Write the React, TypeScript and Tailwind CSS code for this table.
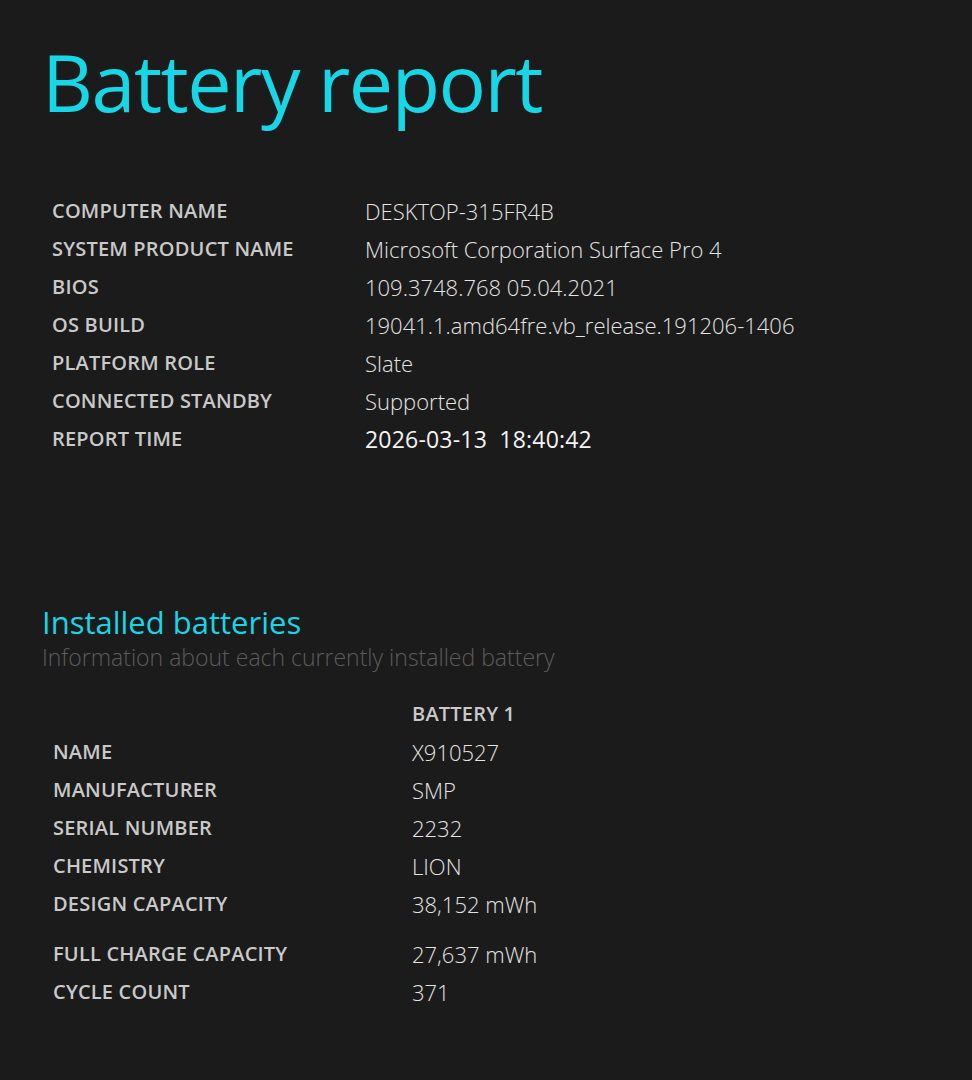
const systemRows: [string, string][] = [
  ["Computer name", "DESKTOP-315FR4B"],
  ["System product name", "Microsoft Corporation Surface Pro 4"],
  ["BIOS", "109.3748.768 05.04.2021"],
  ["OS build", "19041.1.amd64fre.vb_release.191206-1406"],
  ["Platform role", "Slate"],
  ["Connected standby", "Supported"],
];

const batteryRows: [string, string][] = [
  ["Name", "X910527"],
  ["Manufacturer", "SMP"],
  ["Serial number", "2232"],
  ["Chemistry", "LION"],
  ["Design capacity", "38,152 mWh"],
];

const font = { fontFamily: '"Open Sans", "Noto Sans", sans-serif' };

function Label({ children }: { children: React.ReactNode }) {
  return (
    <div className="text-[20px] font-semibold uppercase tracking-[0.2px] text-[#c9c9c9]">
      {children}
    </div>
  );
}

function Value({ children, strong }: { children: React.ReactNode; strong?: boolean }) {
  return (
    <div
      className={
        strong
          ? "text-[23px] font-normal tracking-[0.2px] text-[#f4f4f4]"
          : "text-[22px] font-light text-[#e4e4e4]"
      }
    >
      {children}
    </div>
  );
}

export default function App() {
  return (
    <div className="min-h-[1080px] bg-[#1b1b1b] pl-[42px] pt-[27px]" style={font}>
      <h1 className="text-[79px] font-normal leading-[110px] tracking-[-1.5px] text-[#17d6e6]">
        Battery report
      </h1>

      {/* System info */}
      <div className="mt-[55px] pl-[10px]">
        {systemRows.map(([label, value]) => (
          <div key={label} className="grid h-[38px] grid-cols-[313px_1fr] items-center">
            <Label>{label}</Label>
            <Value>{value}</Value>
          </div>
        ))}
        <div className="grid h-[38px] grid-cols-[313px_1fr] items-center">
          <Label>Report time</Label>
          <Value strong>2026-03-13&nbsp;&nbsp;18:40:42</Value>
        </div>
      </div>

      {/* Installed batteries */}
      <div className="mt-[146px]">
        <h2 className="text-[31px] font-normal leading-[36px] text-[#17d6e6]">Installed batteries</h2>
        <p className="text-[23px] font-light leading-[34px] text-[#5c5c5c]">
          Information about each currently installed battery
        </p>
      </div>

      <div className="mt-[21px] pl-[11px]">
        <div className="grid h-[38px] grid-cols-[359px_1fr] items-center">
          <div />
          <Label>Battery 1</Label>
        </div>
        {batteryRows.map(([label, value]) => (
          <div key={label} className="grid h-[38px] grid-cols-[359px_1fr] items-center">
            <Label>{label}</Label>
            <Value>{value}</Value>
          </div>
        ))}
        <div className="mt-[12px] grid h-[38px] grid-cols-[359px_1fr] items-center">
          <Label>Full charge capacity</Label>
          <Value>27,637 mWh</Value>
        </div>
        <div className="grid h-[38px] grid-cols-[359px_1fr] items-center">
          <Label>Cycle count</Label>
          <Value>371</Value>
        </div>
      </div>
    </div>
  );
}
